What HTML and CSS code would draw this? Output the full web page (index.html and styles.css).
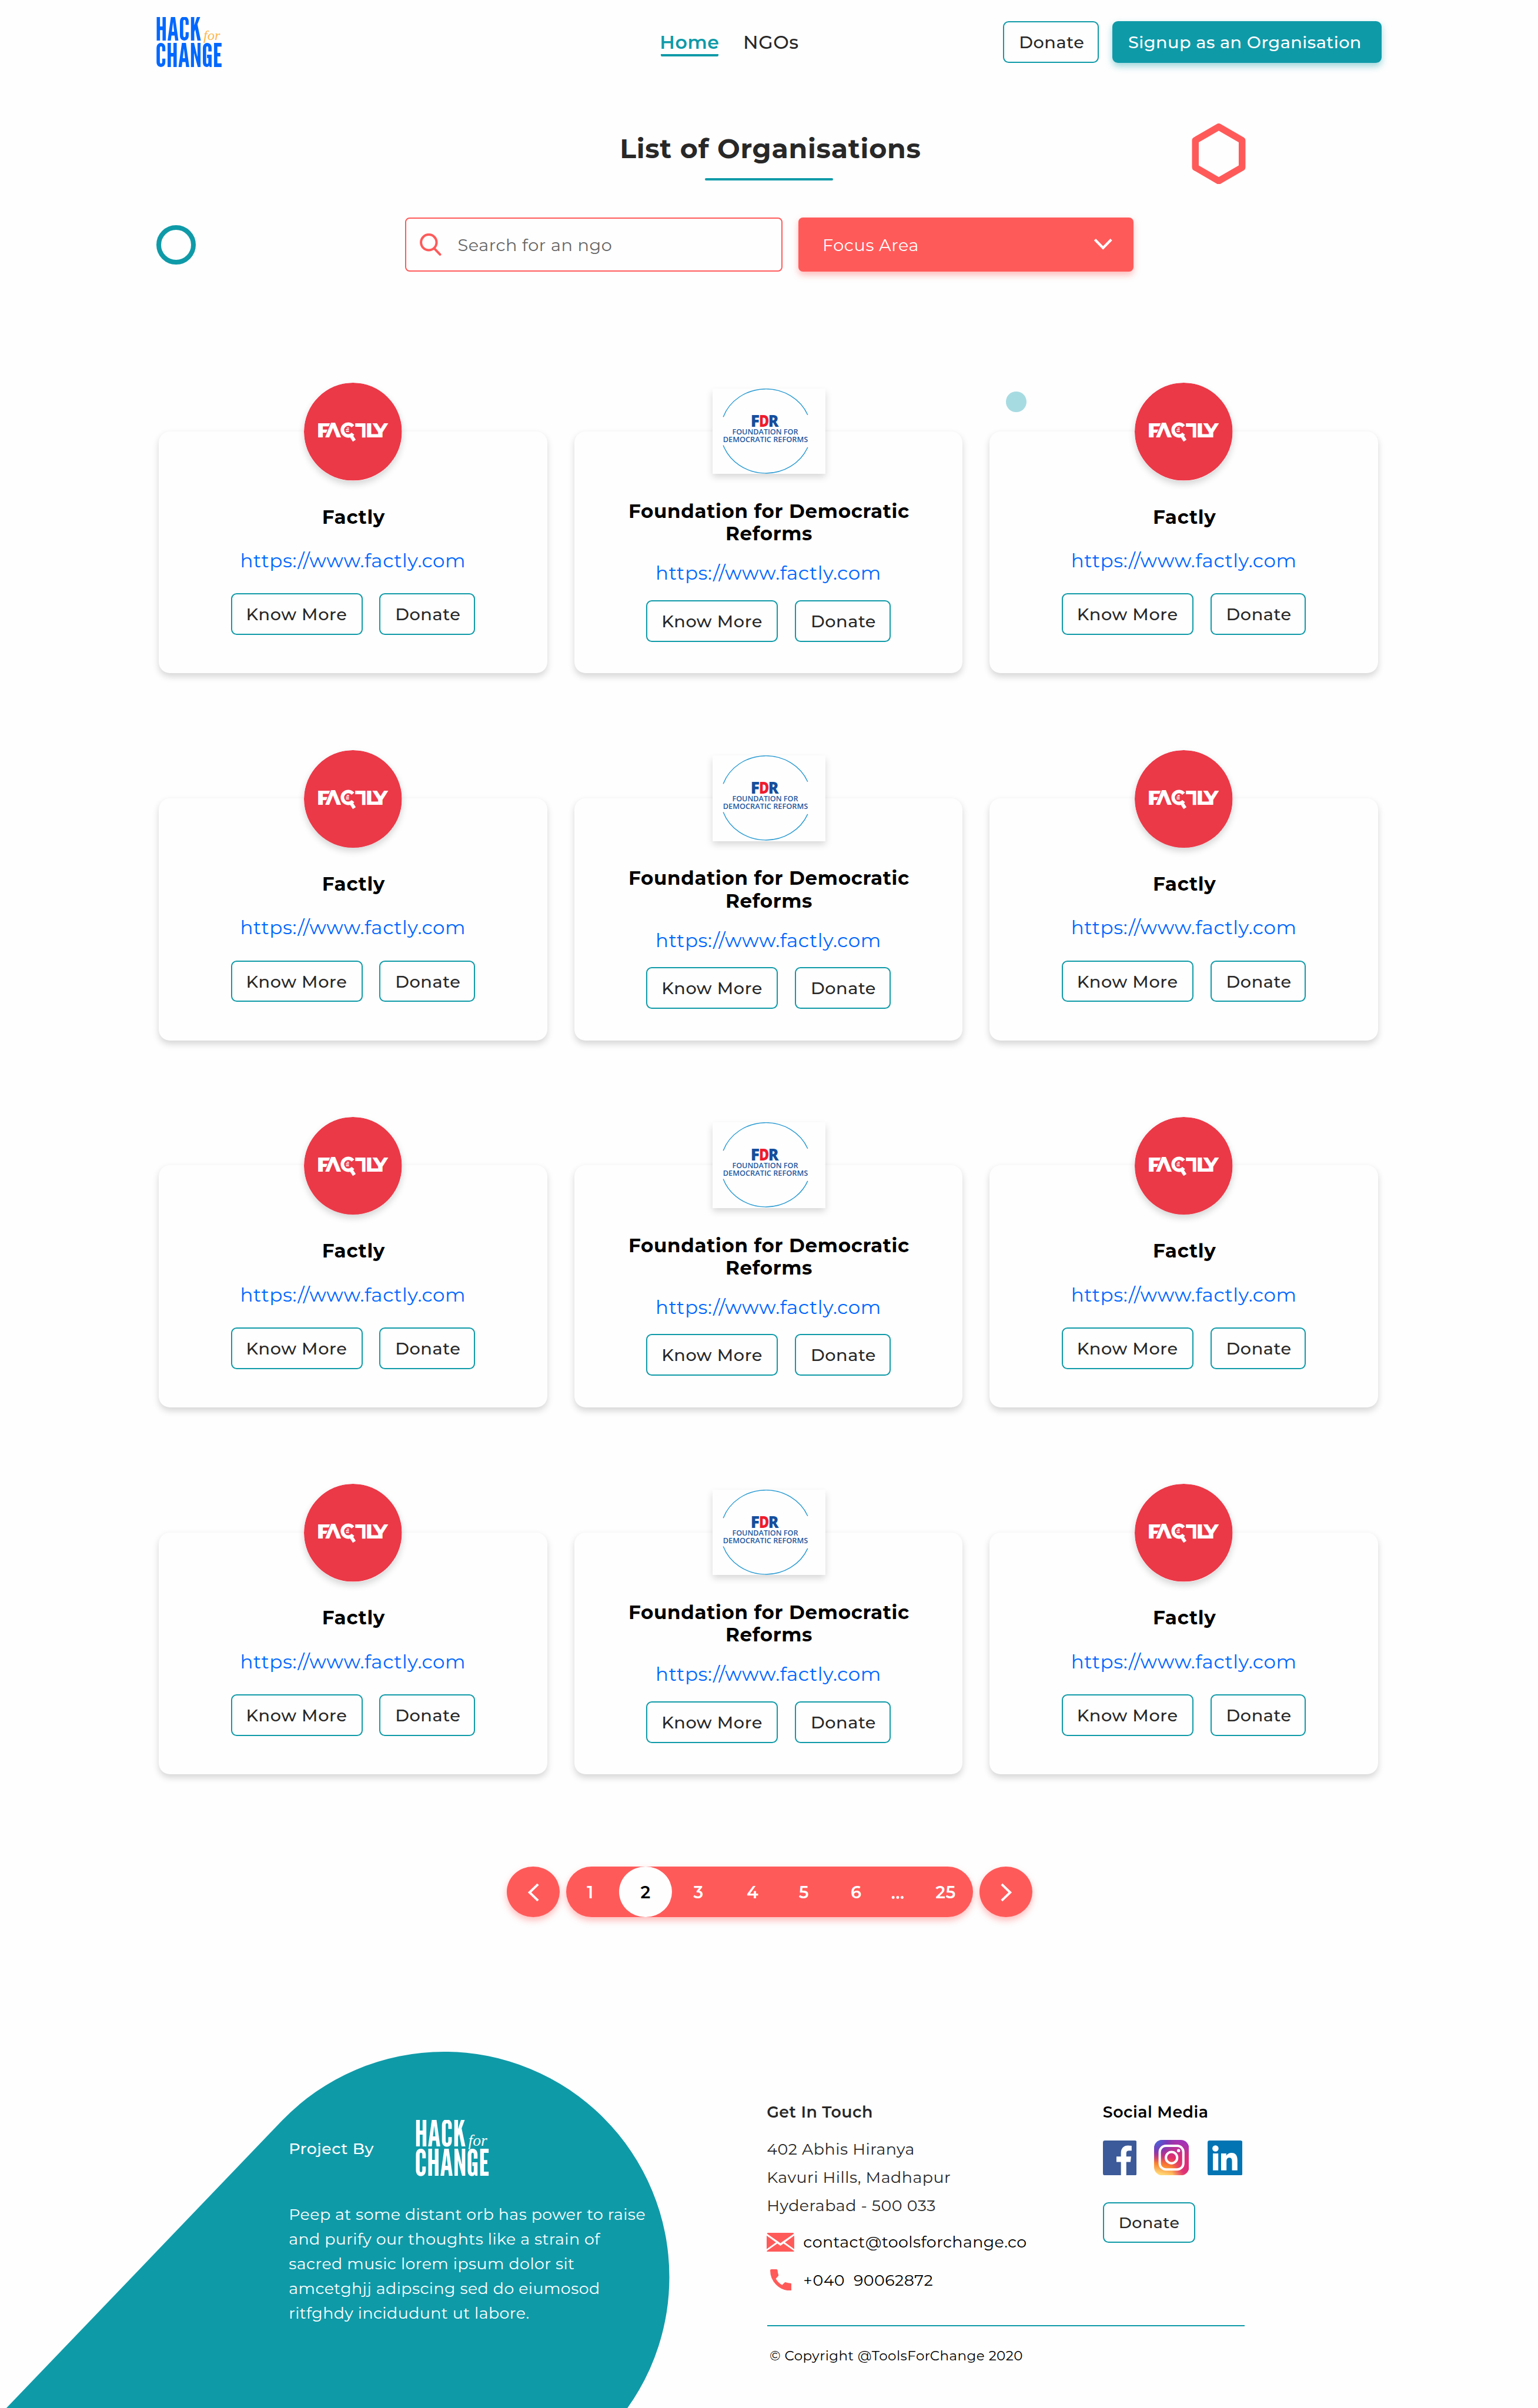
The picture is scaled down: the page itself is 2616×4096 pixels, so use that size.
FILE: index.html
```html
<!DOCTYPE html>
<html lang="en">
<head>
<meta charset="utf-8">
<title>List of Organisations</title>
<link rel="stylesheet" href="styles.css">
</head>
<body>
<svg class="defs" aria-hidden="true">
  <defs>
    <symbol id="hack-logo" viewBox="0 0 117 90">
      <g fill="currentColor" font-family="'League Gothic', 'Bebas Neue', Roboto, sans-serif" font-size="58">
        <text x="-1.500" y="42" textLength="81" lengthAdjust="spacingAndGlyphs">HACK</text>
        <text x="-1.500" y="89" textLength="119.500" lengthAdjust="spacingAndGlyphs">CHANGE</text>
      </g>
      <text class="logo-for" x="83.500" y="41" font-family="'Liberation Serif', serif" font-style="italic" font-size="25" textLength="30" lengthAdjust="spacingAndGlyphs">for</text>
    </symbol>
    <symbol id="factly" viewBox="0 0 174 174">
      <circle cx="87" cy="87" r="87" fill="#eb3948"/>
      <g fill="#fff" font-family="Montserrat, Inter, sans-serif" font-weight="800" font-size="36">
        <text x="22.500" y="97.500" textLength="26.500" lengthAdjust="spacingAndGlyphs">F</text>
        <text class="cut" x="38.500" y="97.500" textLength="27" lengthAdjust="spacingAndGlyphs">Λ</text>
        <text x="109.500" y="97.500" textLength="23" lengthAdjust="spacingAndGlyphs">L</text>
        <text x="122.500" y="97.500" textLength="26.500" lengthAdjust="spacingAndGlyphs">Y</text>
      </g>
      <g fill="none" stroke="#fff" stroke-width="6.200">
        <path d="M87 77.500A10.500 10.500 0 1 0 87 90.500"/>
        <path d="M82 91.500l7.500 11.500"/>
        <path d="M91 75.200h15.200v22.300"/>
      </g>
      <path d="M76 80.500h4M74.500 83.500h5.500M74.500 86.500h5.500" stroke="#fff" stroke-width="1.800"/>
    </symbol>
    <symbol id="fdr" viewBox="0 0 200 152">
      <path d="M0 0h200v152H0z" fill="#fefefe"/>
      <path d="M19 50.300A80.500 75 0 0 1 169 46.700M19 100.700A80.500 75 0 0 0 169 104.300" fill="none" stroke="#2b9bd2" stroke-width="1.500"/>
      <g font-family="'Open Sans', sans-serif" font-weight="800" font-size="29" fill="#154f9c">
        <text x="67.500" y="68" textLength="16" lengthAdjust="spacingAndGlyphs">F</text>
        <text x="82.500" y="68" textLength="18" lengthAdjust="spacingAndGlyphs" fill="#ee1c2e">D</text>
        <text x="99" y="68" textLength="18.500" lengthAdjust="spacingAndGlyphs">R</text>
      </g>
      <g font-family="'Open Sans', sans-serif" font-weight="600" font-size="13.400" fill="#1d58a2">
        <text x="35" y="81.800" textLength="117" lengthAdjust="spacingAndGlyphs">FOUNDATION FOR</text>
        <text x="18.500" y="95" textLength="151" lengthAdjust="spacingAndGlyphs">DEMOCRATIC REFORMS</text>
      </g>
    </symbol>
    <linearGradient id="ig-base" x1="0.350" y1="1" x2="0.600" y2="0">
      <stop offset="0" stop-color="#ffd776"/><stop offset=".25" stop-color="#f9822f"/><stop offset=".5" stop-color="#e2306a"/><stop offset="1" stop-color="#a034b8"/>
    </linearGradient>
    <radialGradient id="ig-blue" cx=".05" cy="0" r=".65">
      <stop offset="0" stop-color="#3a6fe0"/><stop offset=".5" stop-color="#6a3cc0" stop-opacity=".8"/><stop offset="1" stop-color="#a034a0" stop-opacity="0"/>
    </radialGradient>
    <radialGradient id="ig-pink" cx="1" cy=".8" r=".5">
      <stop offset="0" stop-color="#dc2a7c"/><stop offset=".4" stop-color="#dc2a7c" stop-opacity=".9"/><stop offset="1" stop-color="#dc2a7c" stop-opacity="0"/>
    </radialGradient>
  </defs>
</svg>

<header class="site-header">
  <svg class="brand" viewBox="0 0 117 90"><use href="#hack-logo"/></svg>
  <nav class="nav">
    <a class="nav-link active">Home</a>
    <a class="nav-link">NGOs</a>
  </nav>
  <div class="actions">
    <a class="btn donate">Donate</a>
    <a class="btn signup">Signup as an Organisation</a>
  </div>
</header>

<main>
  <svg class="deco hexagon" viewBox="0 0 96 108"><path d="M48 6l41.500 24v48L48 102 6.500 78V30z" fill="none" stroke="#ff5a5a" stroke-width="12" stroke-linejoin="round"/></svg>
  <i class="deco ring"></i>
  <i class="deco dot"></i>

  <h1 class="title">List of Organisations</h1>
  <div class="title-rule"></div>

  <div class="filters">
    <div class="search">
      <svg class="search-icon" viewBox="0 0 38 40"><circle cx="16" cy="16" r="13.800"/><path d="M26 27l10 10.500"/></svg>
      <span>Search for an ngo</span>
    </div>
    <div class="focus">
      <span>Focus Area</span>
      <svg class="chevron" viewBox="0 0 34 22"><path d="M2.500 2.500L17 17.500 31.500 2.500"/></svg>
    </div>
  </div>

  <section class="cards">
    <article class="card"><svg class="round-logo" viewBox="0 0 174 174"><use href="#factly"/></svg><h2>Factly</h2><a class="link">https://www.factly.com</a><div class="buttons"><a class="btn know">Know More</a><a class="btn donate">Donate</a></div></article>
    <article class="card wide"><svg class="box-logo" viewBox="0 0 200 152"><use href="#fdr"/></svg><h2>Foundation for Democratic<br>Reforms</h2><a class="link">https://www.factly.com</a><div class="buttons"><a class="btn know">Know More</a><a class="btn donate">Donate</a></div></article>
    <article class="card"><svg class="round-logo" viewBox="0 0 174 174"><use href="#factly"/></svg><h2>Factly</h2><a class="link">https://www.factly.com</a><div class="buttons"><a class="btn know">Know More</a><a class="btn donate">Donate</a></div></article>

    <article class="card"><svg class="round-logo" viewBox="0 0 174 174"><use href="#factly"/></svg><h2>Factly</h2><a class="link">https://www.factly.com</a><div class="buttons"><a class="btn know">Know More</a><a class="btn donate">Donate</a></div></article>
    <article class="card wide"><svg class="box-logo" viewBox="0 0 200 152"><use href="#fdr"/></svg><h2>Foundation for Democratic<br>Reforms</h2><a class="link">https://www.factly.com</a><div class="buttons"><a class="btn know">Know More</a><a class="btn donate">Donate</a></div></article>
    <article class="card"><svg class="round-logo" viewBox="0 0 174 174"><use href="#factly"/></svg><h2>Factly</h2><a class="link">https://www.factly.com</a><div class="buttons"><a class="btn know">Know More</a><a class="btn donate">Donate</a></div></article>

    <article class="card"><svg class="round-logo" viewBox="0 0 174 174"><use href="#factly"/></svg><h2>Factly</h2><a class="link">https://www.factly.com</a><div class="buttons"><a class="btn know">Know More</a><a class="btn donate">Donate</a></div></article>
    <article class="card wide"><svg class="box-logo" viewBox="0 0 200 152"><use href="#fdr"/></svg><h2>Foundation for Democratic<br>Reforms</h2><a class="link">https://www.factly.com</a><div class="buttons"><a class="btn know">Know More</a><a class="btn donate">Donate</a></div></article>
    <article class="card"><svg class="round-logo" viewBox="0 0 174 174"><use href="#factly"/></svg><h2>Factly</h2><a class="link">https://www.factly.com</a><div class="buttons"><a class="btn know">Know More</a><a class="btn donate">Donate</a></div></article>

    <article class="card"><svg class="round-logo" viewBox="0 0 174 174"><use href="#factly"/></svg><h2>Factly</h2><a class="link">https://www.factly.com</a><div class="buttons"><a class="btn know">Know More</a><a class="btn donate">Donate</a></div></article>
    <article class="card wide"><svg class="box-logo" viewBox="0 0 200 152"><use href="#fdr"/></svg><h2>Foundation for Democratic<br>Reforms</h2><a class="link">https://www.factly.com</a><div class="buttons"><a class="btn know">Know More</a><a class="btn donate">Donate</a></div></article>
    <article class="card"><svg class="round-logo" viewBox="0 0 174 174"><use href="#factly"/></svg><h2>Factly</h2><a class="link">https://www.factly.com</a><div class="buttons"><a class="btn know">Know More</a><a class="btn donate">Donate</a></div></article>
  </section>

  <nav class="pagination">
    <a class="arrow"><svg viewBox="0 0 94 90"><path d="M55.500 31.500L40.500 46l15 14.500"/></svg></a>
    <div class="pages">
      <a class="first">1</a><a class="current">2</a><a>3</a><a class="p4">4</a><a class="p5">5</a><a class="p6">6</a><span class="dots">...</span><a class="last">25</a>
    </div>
    <a class="arrow"><svg viewBox="0 0 94 90"><path d="M39.500 31.500L54.500 46l-15 14.500"/></svg></a>
  </nav>
</main>

<footer class="site-footer">
  <svg class="blob" viewBox="0 0 1190 633"><path d="M11.300 633L500.300 123A400 400 0 0 1 789 0A400 400 0 0 1 1189 400A400 400 0 0 1 1114.500 633z" fill="#0f9aa8"/></svg>
  <section class="about">
    <div class="project"><span>Project By</span><svg class="brand-white" viewBox="0 0 117 90"><use href="#hack-logo"/></svg></div>
    <p>Peep at some distant orb has power to raise<br>and purify our thoughts like a strain of<br>sacred music lorem ipsum dolor sit<br>amcetghjj adipscing sed do eiumosod<br>ritfghdy incidudunt ut labore.</p>
  </section>
  <section class="info">
    <div class="columns">
      <div class="contact">
        <h3>Get In Touch</h3>
        <address>402 Abhis Hiranya<br>Kavuri Hills, Madhapur<br>Hyderabad - 500 033</address>
        <div class="contact-row">
          <svg class="mail" viewBox="0 0 49 34"><path d="M3 0h43q2 0 2.500 1.500L27 16.500l-2.500 2-2.500-2L.5 1.500Q1 0 3 0zM0 5l16.500 12L0 29zM49 5v24L32.500 17zM19 19l5.500 4 5.500-4 19 13.500Q48 34 46 34H3q-2 0-3-1.500z" fill="#ff5a5a"/></svg>
          <span>contact@toolsforchange.co</span>
        </div>
        <div class="contact-row phone-row">
          <svg class="phone" viewBox="0 0 38 38"><path d="M2.200 0H11q2 0 2.200 2.100.2 4.100 1.500 8 .4 1.300-.6 2.300L10 16.800q4 7.300 11.200 11.200l4.300-4.200q1-1 2.300-.6 3.900 1.300 8 1.500 2.200.2 2.200 2.200v8.800Q38 38 35.900 38 20.900 38 10.500 27.500T0 2.200Q0 0 2.200 0z" fill="#ff5a5a"/></svg>
          <span>+040&nbsp; 90062872</span>
        </div>
      </div>
      <div class="social">
        <h3>Social Media</h3>
        <div class="icons">
          <svg class="fb" viewBox="0 0 60 62"><rect width="60" height="62" rx="3.500" fill="#3c5a99"/><path d="M32 62V38h-8v-9.500h8V22C32 14 37 9 44.500 9q4 0 6.500.5V18h-4.500Q41.500 18 41.500 22.500v6H50L49 38h-7.500v24z" fill="#fff"/></svg>
          <svg class="ig" viewBox="0 0 62 63"><rect width="62" height="63" rx="14.500" fill="url(#ig-base)"/><rect width="62" height="63" rx="14.500" fill="url(#ig-pink)"/><rect width="62" height="63" rx="14.500" fill="url(#ig-blue)"/><g fill="none" stroke="#fff" stroke-width="4.200"><rect x="10" y="10.500" width="42" height="42" rx="11"/><circle cx="31" cy="31.500" r="10"/></g><circle cx="43.500" cy="19" r="2.800" fill="#fff"/></svg>
          <svg class="li" viewBox="0 0 62 62"><rect width="62" height="62" rx="3.500" fill="#0274b3"/><g fill="#fff"><circle cx="14" cy="14" r="5.500"/><path d="M9.500 23H19v30H9.500zM24 23h9.200v4c2-3.200 5.300-5 9.300-5C50 22 53 27 53 35v18h-9.600V37c0-4-1-6.500-4.600-6.500-4 0-5.200 2.800-5.200 6.500v16H24z"/></g></svg>
        </div>
        <a class="btn donate">Donate</a>
      </div>
    </div>
    <hr>
    <p class="copyright">© Copyright @ToolsForChange 2020</p>
  </section>
</footer>
</body>
</html>
```
FILE: styles.css
```css
:root {
  --teal: #0f9aa8;
  --coral: #ff5a5a;
  --ink: #282828;
  --logo-for: #ffb74d;
  font-size: 9.5754px;
}

* { box-sizing: border-box; }

body {
  margin: 0;
  background: #fefefe;
  color: var(--ink);
  font-family: Montserrat, Inter, sans-serif;
  font-size: 3rem;
  font-weight: 500;
  letter-spacing: .02em;
  overflow-x: hidden;
}

svg { display: block; flex: none; letter-spacing: 0; }
.defs { position: absolute; width: 0; height: 0; }
h1, h2, h3, p { margin: 0; }
span, a, h1, h2, h3 { white-space: nowrap; letter-spacing: .02em; }

/* Buttons */
.btn {
  display: block;
  height: 7.4rem;
  line-height: 7.1rem;
  border: 2px solid var(--teal);
  border-radius: 1rem;
  padding-left: 2.6rem;
}
.btn.donate { width: 17rem; }
.btn.know { width: 23.4rem; padding-left: 2.5rem; letter-spacing: .0228em; }
.btn.signup {
  width: 47.8rem;
  background: var(--teal);
  color: #fff;
  letter-spacing: .0164em;
  box-shadow: 0 .6rem 1.2rem rgba(15, 154, 168, .4);
}

/* Header */
.site-header {
  display: flex;
  align-items: flex-start;
  height: 15rem;
  padding: 3rem 27.8rem 0;
}
.brand { width: 11.7rem; height: 9rem; color: #0068ff; overflow: visible; }
.logo-for { fill: var(--logo-for); }
.cut { stroke: #eb3948; stroke-width: 3px; paint-order: stroke; }
.nav { display: flex; gap: 4.4rem; margin: 2rem 0 0 77.9rem; }
.nav-link {
  width: 10.2rem;
  padding-top: .3rem;
  line-height: 4.3rem;
  font-size: 3.3rem;
}
.nav-link.active {
  border-bottom: 4px solid var(--teal);
  border-radius: .2rem;
  color: var(--teal);
  font-weight: 600;
  text-indent: -.2rem;
}
.actions { display: flex; gap: 2.4rem; margin: .8rem 0 0 auto; }

/* Decorations */
main { position: relative; }
.deco { position: absolute; }
.hexagon { left: 211.7rem; top: 6.9rem; width: 9.6rem; height: 10.8rem; }
.ring { left: 27.8rem; top: 25rem; width: 7rem; height: 7rem; border: 8px solid var(--teal); border-radius: 50%; }
.dot { left: 178.7rem; top: 54.6rem; width: 3.6rem; height: 3.6rem; border-radius: 50%; background: #a7dbe2; }

/* Title */
.title {
  padding: 8.5rem 0 0 .5rem;
  text-align: center;
  font-size: 4.8rem;
  line-height: 6rem;
  font-weight: 700;
  letter-spacing: .016em;
}
.title-rule { width: 22.8rem; height: 4px; margin: 2.1rem auto 0; border-radius: .2rem; background: var(--teal); }

/* Filters */
.filters { display: flex; gap: 2.8rem; margin-top: 6.6rem; padding-left: 72rem; }
.search, .focus { display: flex; align-items: center; height: 9.6rem; border-radius: .8rem; font-weight: 400; line-height: 4rem; }
.search span, .focus span { padding-top: .2rem; }
.search { width: 67rem; border: 2px solid var(--coral); padding-left: 2.4rem; color: #666; }
.search-icon { width: 3.8rem; height: 4rem; margin-right: 2.9rem; fill: none; stroke: var(--coral); stroke-width: 4.2; stroke-linecap: round; }
.focus {
  width: 59.6rem;
  padding: 0 3.7rem 0 4.3rem;
  justify-content: space-between;
  background: var(--coral);
  color: #fff;
  box-shadow: 0 .6rem 1.2rem rgba(255, 90, 90, .4);
}
.chevron { width: 3.4rem; height: 2.2rem; fill: none; stroke: #fff; stroke-width: 4.5; }

/* Cards */
.cards {
  display: grid;
  grid-template-columns: repeat(3, 69rem);
  grid-auto-rows: 43rem;
  gap: 22.2rem 4.8rem;
  margin-top: 28.4rem;
  padding-left: 28.2rem;
}
.card {
  display: flex;
  flex-direction: column;
  align-items: center;
  border-radius: 2rem;
  background: #fefefe;
  box-shadow: 0 .6rem 1.2rem rgba(0, 0, 0, .16);
}
.round-logo { width: 17.4rem; height: 17.4rem; margin-top: -8.6rem; border-radius: 50%; box-shadow: 0 .6rem 1.2rem rgba(0, 0, 0, .16); }
.box-logo { width: 20rem; height: 15.2rem; margin: -7.6rem 0 0 .2rem; box-shadow: 0 .6rem 1.2rem rgba(0, 0, 0, .16); }
.card h2 {
  margin-top: 4.35rem;
  padding-left: .2rem;
  color: #000;
  font-size: 3.4rem;
  line-height: 4rem;
  font-weight: 700;
  text-align: center;
}
.link { margin-top: 3.8rem; color: #06f; font-size: 3.4rem; line-height: 4rem; font-weight: 400; letter-spacing: .0186em; }
.buttons { display: flex; gap: 3rem; margin-top: 3.85rem; }
.card.wide h2 { margin-top: 4.55rem; }
.card.wide .link { margin-top: 3rem; }
.card.wide .buttons { margin-top: 2.85rem; }

/* Pagination */
.pagination { display: flex; gap: 1.2rem; margin-top: 16.4rem; padding-left: 90rem; color: #fff; font-weight: 600; }
.arrow, .pages { height: 9rem; background: var(--coral); box-shadow: 0 .6rem 1.2rem rgba(255, 90, 90, .4); }
.arrow { width: 9.4rem; border-radius: 50%; }
.arrow svg { width: 9.4rem; height: 9rem; fill: none; stroke: #fff; stroke-width: 4.2; }
.pages { display: flex; width: 72.2rem; border-radius: 4.5rem; line-height: 9.1rem; text-align: center; }
.pages > * { width: 9.4rem; }
.pages .first { padding-right: .9rem; }
.pages .current { border-radius: 50%; background: #fefefe; color: #000; }
.pages .p4 { width: 9.8rem; }
.pages .p5 { width: 8.4rem; }
.pages .p6 { width: 10.2rem; }
.pages .dots { width: 4.6rem; line-height: 9.5rem; }
.pages .last { width: 11rem; padding-left: 1.4rem; }

/* Footer */
.site-footer { position: relative; display: flex; height: 87.2rem; padding: 32.6rem 0 0 51.3rem; overflow: hidden; font-size: 2.8rem; }
.blob { position: absolute; left: 0; bottom: 0; width: 119rem; height: 63.3rem; overflow: visible; }
.about { --logo-for: #fff; position: relative; width: 84.9rem; padding-top: 3.4rem; color: #fff; }
.project { display: flex; align-items: center; }
.project span { width: 22.5rem; }
.brand-white { width: 13.1rem; height: 10.08rem; overflow: visible; }
.about p { margin-top: 4.5rem; line-height: 4.4rem; font-weight: 400; letter-spacing: .0175em; }
.info { width: 84.9rem; }
.columns { display: grid; grid-template-columns: 59.7rem 1fr; }
h3 { color: var(--ink); font-size: 2.8rem; line-height: 4rem; font-weight: 600; }
.social h3 { color: #000; }
address { margin-top: 2.1rem; font-style: normal; font-weight: 400; line-height: 5rem; letter-spacing: .0205em; }
.contact-row { display: flex; align-items: center; height: 4rem; margin-top: 2rem; color: #000; font-weight: 400; }
.contact-row span { letter-spacing: .0174em; }
.phone-row { margin-top: 2.7rem; }
.mail { width: 4.9rem; height: 3.4rem; margin-right: 1.6rem; }
.phone { width: 3.8rem; height: 3.8rem; margin: 0 2.1rem 0 .6rem; }
.icons { display: flex; align-items: flex-end; height: 6.3rem; margin-top: 2.9rem; }
.fb { width: 6rem; height: 6.2rem; margin-right: 3.1rem; }
.ig { width: 6.2rem; height: 6.3rem; margin-right: 3.3rem; }
.li { width: 6.2rem; height: 6.2rem; }
.social .btn { width: 16.4rem; height: 7.2rem; margin-top: 4.8rem; line-height: 6.8rem; }
hr { width: 84.8rem; height: 2px; margin: 6rem 0 0 .1rem; border: 0; background: var(--teal); }
.copyright { margin: 3.8rem 0 0 .5rem; color: #000; font-size: 2.4rem; line-height: 3rem; font-weight: 400; letter-spacing: .0205em; }
```
